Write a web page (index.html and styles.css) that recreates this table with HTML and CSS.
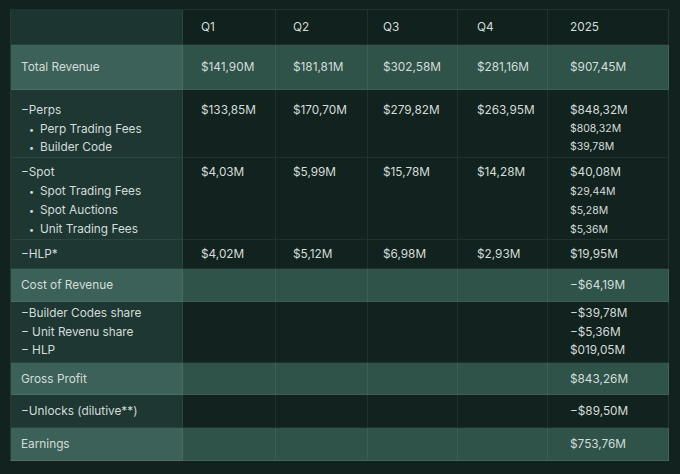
FILE: index.html
```html
<!DOCTYPE html>
<html lang="en">
<head>
<meta charset="utf-8">
<title>Revenue 2025</title>
<link rel="stylesheet" href="styles.css">
</head>
<body>
<table class="fin">
  <colgroup>
    <col class="c-lbl"><col class="c-q1"><col class="c-q2"><col class="c-q3"><col class="c-q4"><col class="c-y">
  </colgroup>
  <thead>
    <tr class="r-head">
      <th class="lbl"></th><th>Q1</th><th>Q2</th><th>Q3</th><th>Q4</th><th class="y">2025</th>
    </tr>
  </thead>
  <tbody>
    <tr class="hl r-total">
      <td class="lbl">Total Revenue</td><td>$141,90M</td><td>$181,81M</td><td>$302,58M</td><td>$281,16M</td><td class="y">$907,45M</td>
    </tr>
    <tr class="multi r-perps">
      <td class="lbl">
        <div class="ln">−Perps</div>
        <div class="ln sub"><span class="dot">•</span>Perp Trading Fees</div>
        <div class="ln sub"><span class="dot">•</span>Builder Code</div>
      </td>
      <td><div class="ln">$133,85M</div></td><td><div class="ln">$170,70M</div></td><td><div class="ln">$279,82M</div></td><td><div class="ln">$263,95M</div></td>
      <td class="y">
        <div class="ln">$848,32M</div>
        <div class="ln small">$808,32M</div>
        <div class="ln small">$39,78M</div>
      </td>
    </tr>
    <tr class="multi r-spot">
      <td class="lbl">
        <div class="ln">−Spot</div>
        <div class="ln sub"><span class="dot">•</span>Spot Trading Fees</div>
        <div class="ln sub"><span class="dot">•</span>Spot Auctions</div>
        <div class="ln sub"><span class="dot">•</span>Unit Trading Fees</div>
      </td>
      <td><div class="ln">$4,03M</div></td><td><div class="ln">$5,99M</div></td><td><div class="ln">$15,78M</div></td><td><div class="ln">$14,28M</div></td>
      <td class="y">
        <div class="ln">$40,08M</div>
        <div class="ln small">$29,44M</div>
        <div class="ln small">$5,28M</div>
        <div class="ln small">$5,36M</div>
      </td>
    </tr>
    <tr class="r-hlp">
      <td class="lbl">−HLP*</td><td>$4,02M</td><td>$5,12M</td><td>$6,98M</td><td>$2,93M</td><td class="y">$19,95M</td>
    </tr>
    <tr class="hl r-cost">
      <td class="lbl">Cost of Revenue</td><td></td><td></td><td></td><td></td><td class="y">−$64,19M</td>
    </tr>
    <tr class="multi r-builder">
      <td class="lbl">
        <div class="ln">−Builder Codes share</div>
        <div class="ln">− Unit Revenu share</div>
        <div class="ln">− HLP</div>
      </td>
      <td></td><td></td><td></td><td></td>
      <td class="y">
        <div class="ln">−$39,78M</div>
        <div class="ln">−$5,36M</div>
        <div class="ln">$019,05M</div>
      </td>
    </tr>
    <tr class="hl r-gross">
      <td class="lbl">Gross Profit</td><td></td><td></td><td></td><td></td><td class="y">$843,26M</td>
    </tr>
    <tr class="r-unlocks">
      <td class="lbl">−Unlocks (dilutive**)</td><td></td><td></td><td></td><td></td><td class="y">−$89,50M</td>
    </tr>
    <tr class="hl r-earn">
      <td class="lbl">Earnings</td><td></td><td></td><td></td><td></td><td class="y">$753,76M</td>
    </tr>
  </tbody>
</table>
</body>
</html>
```
FILE: styles.css
```css
html, body {
  margin: 0;
  padding: 0;
  background: #12231f;
  width: 680px;
  height: 474px;
  overflow: hidden;
}
body {
  padding: 9px 0 0 10px;
  box-sizing: border-box;
  font-family: Inter, "Noto Sans", sans-serif;
  font-size: 11.8px;
  color: #d3ddd9;
}
.fin {
  border-collapse: collapse;
  table-layout: fixed;
  width: 658px;
  border: 1px solid rgba(255, 255, 255, 0.10);
}
.c-lbl { width: 172px; }
.c-q1 { width: 93px; }
.c-q2 { width: 92px; }
.c-q3 { width: 90px; }
.c-q4 { width: 90px; }
.c-y { width: 121px; }

.fin th, .fin td {
  padding: 0 0 0 18px;
  text-align: left;
  font-weight: 400;
  background: #12221e;
  border-left: 1px solid rgba(255, 255, 255, 0.07);
  border-top: 1px solid rgba(255, 255, 255, 0.07);
  vertical-align: middle;
  white-space: nowrap;
}
.fin th { background: #11211d; }
.fin th:nth-child(2), .fin td:nth-child(2) { padding-left: 18px; }
.fin th:nth-child(3), .fin td:nth-child(3) { padding-left: 17px; }
.fin th:nth-child(4), .fin td:nth-child(4) { padding-left: 15px; }
.fin th:nth-child(5), .fin td:nth-child(5) { padding-left: 19px; }
.fin .lbl {
  padding-left: 10px;
  background: #1e3732;
  border-left: none;
}
.fin th.lbl { background: #1d3530; }
.fin .y { padding-left: 22px; }

.fin tr.hl td { background: #2f5249; }
.fin tr.hl td.lbl { background: #3c6158; }

.r-head { height: 35px; }
.r-total { height: 45px; }
.r-perps { height: 68px; }
.r-spot { height: 82px; }
.r-hlp { height: 29px; }
.r-cost { height: 33px; }
.r-builder { height: 61px; }
.r-gross { height: 32px; }
.r-unlocks { height: 33px; }
.r-earn { height: 33px; }

.fin tr.multi td { vertical-align: top; }
.r-perps td { padding-top: 11px; }
.r-spot td { padding-top: 5px; }
.r-builder td { padding-top: 2px; }

.ln { line-height: 18.6px; height: 18.6px; }
.r-spot .ln { line-height: 19px; height: 19px; }
.sub { padding-left: 8px; }
.dot {
  display: inline-block;
  width: 11px;
  font-size: 9px;
}
.small { font-size: 10.5px; }
```
